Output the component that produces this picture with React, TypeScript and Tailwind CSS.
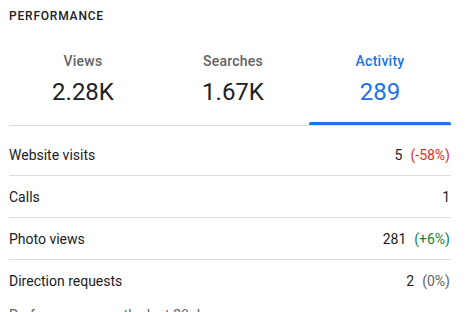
import React from 'react';

export const App: React.FC = () => {
  const tabs = [
    { label: 'Views', value: '2.28K', width: 'w-[148px]', active: false },
    { label: 'Searches', value: '1.67K', width: 'w-[152px]', active: false },
    { label: 'Activity', value: '289', width: 'w-[142px]', active: true },
  ];

  const rows = [
    { name: 'Website visits', value: '5', change: '(-58%)', tone: 'text-[#d93025]' },
    { name: 'Calls', value: '1', change: '', tone: '' },
    { name: 'Photo views', value: '281', change: '(+6%)', tone: 'text-[#188038]' },
    { name: 'Direction requests', value: '2', change: '(0%)', tone: 'text-[#5f6368]' },
  ];

  return (
    <div className="w-[467px] h-[312px] overflow-hidden bg-white pl-[9px] pr-[16px] pt-[8px] font-['Roboto',sans-serif] text-[#202124]">
      <h2 className="text-[12px] leading-[16px] font-medium tracking-[0.8px] uppercase">Performance</h2>

      <div className="flex mt-[27px] border-b border-[#dadce0]">
        {tabs.map((tab) => (
          <div key={tab.label} className={`${tab.width} relative flex flex-col items-center pb-[17px]`}>
            <span
              className={`text-[14px] leading-[20px] font-medium tracking-[0.25px] ${
                tab.active ? 'text-[#1a73e8]' : 'text-[#5f6368]'
              }`}
            >
              {tab.label}
            </span>
            <span
              className={`mt-[5px] text-[24px] leading-[32px] ${tab.active ? 'text-[#1a73e8]' : 'text-[#202124]'}`}
            >
              {tab.value}
            </span>
            {tab.active && <div className="absolute bottom-0 left-0 right-0 h-[3px] rounded-t-[2px] bg-[#1a73e8]" />}
          </div>
        ))}
      </div>

      <ul className="mt-[8px]">
        {rows.map((row, i) => (
          <li
            key={row.name}
            className={`flex items-center justify-between h-[42px] text-[14px] leading-[20px] ${
              i < rows.length - 1 ? 'border-b border-[#dadce0]' : 'h-[41px]'
            }`}
          >
            <span>{row.name}</span>
            <span className="flex gap-[8px] pr-[1px]">
              <span>{row.value}</span>
              {row.change && <span className={row.tone}>{row.change}</span>}
            </span>
          </li>
        ))}
      </ul>

      <p className="mt-[3px] text-[14px] leading-[20px] text-[#5f6368]">Performance over the last 28 days</p>
    </div>
  );
};

export default App;
